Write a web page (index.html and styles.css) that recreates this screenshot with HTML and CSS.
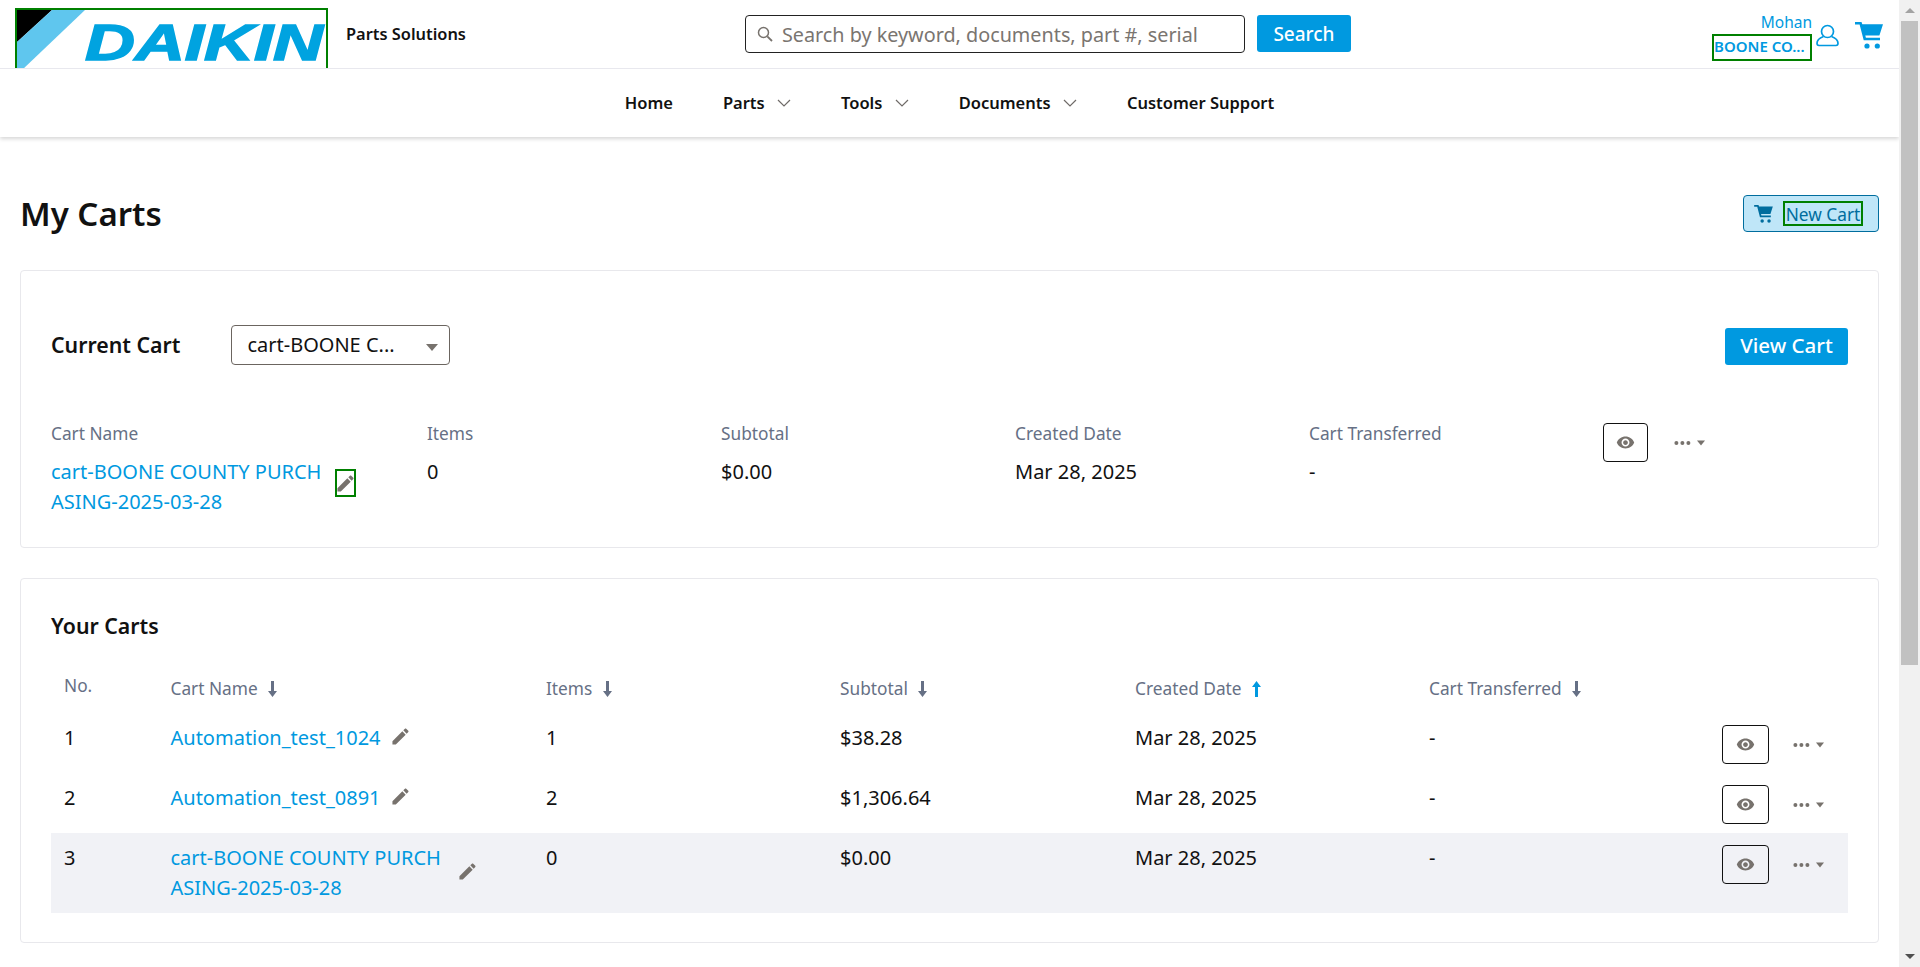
FILE: index.html
```html
<!DOCTYPE html>
<html lang="en">
<head>
    <meta charset="UTF-8">
    <title>My Carts</title>
    <link rel="stylesheet" href="styles.css">
</head>
<body>
    <svg class="icon-defs" width="0" height="0">
        <defs>
            <symbol id="pencil" viewBox="2.500 2.500 19 19"><path d="M3 17.250V21h3.750L17.810 9.940l-3.750-3.750L3 17.250zM20.710 7.040c.39-.39.39-1.020 0-1.410l-2.340-2.340c-.39-.39-1.020-.39-1.410 0l-1.830 1.830 3.750 3.750 1.830-1.830z"/></symbol>
            <symbol id="eye" viewBox="0 0 24 24"><path d="M12 4.500C7 4.500 2.730 7.610 1 12c1.730 4.390 6 7.500 11 7.500s9.270-3.110 11-7.500c-1.730-4.390-6-7.500-11-7.500zM12 17c-2.760 0-5-2.240-5-5s2.240-5 5-5 5 2.240 5 5-2.240 5-5 5zm0-8c-1.660 0-3 1.340-3 3s1.340 3 3 3 3-1.340 3-3-1.340-3-3-3z"/></symbol>
            <symbol id="cart" viewBox="0 0 28 27"><path d="M0 0h6.500l.8 2.300H28l-3.600 11.200H10.300l.6 2.200H25v2.500H8.700L4.600 2.500H0z"/><circle cx="12" cy="24" r="2.600"/><circle cx="22.300" cy="24" r="2.600"/></symbol>
            <symbol id="arrow-down" viewBox="0 0 9 16"><path d="M3 0h3v10h3l-4.500 6L0 10h3z"/></symbol>
            <symbol id="arrow-up" viewBox="0 0 9 16"><path d="M3 16h3V6h3L4.500 0 0 6h3z"/></symbol>
            <symbol id="more" viewBox="0 0 31 6"><circle cx="2.400" cy="3" r="2"/><circle cx="8.400" cy="3" r="2"/><circle cx="14.400" cy="3" r="2"/><path d="M23 .5h8l-4 5z"/></symbol>
            <symbol id="chevron" viewBox="0 0 14 8"><path d="M1 1l6 6 6-6" fill="none" stroke="currentColor" stroke-width="1.200"/></symbol>
        </defs>
    </svg>

    <div class="page">
        <header class="site-header">
            <div class="top-bar">
                <a class="logo">
                    <svg width="309" height="62" viewBox="0 0 309 62">
                        <polygon points="0,0 35,0 0,32" fill="#000"/>
                        <polygon points="35,0 68,0 5,60 0,60 0,32" fill="#5fc6ee"/>
                        <text class="logo-text" x="68" y="49.500" textLength="238" lengthAdjust="spacingAndGlyphs">DAIKIN</text>
                    </svg>
                </a>
                <span class="brand-sub">Parts Solutions</span>
                <form class="search">
                    <div class="search-box">
                        <svg class="search-icon" width="16" height="16" viewBox="0 0 16 16"><circle cx="6.500" cy="6.500" r="5" fill="none" stroke="#77726d" stroke-width="1.500"/><path d="M10.300 10.300L15 15" stroke="#77726d" stroke-width="1.800"/></svg>
                        <input class="search-input" type="text" placeholder="Search by keyword, documents, part #, serial number">
                    </div>
                    <button class="btn btn-primary search-btn" type="button">Search</button>
                </form>
                <div class="account">
                    <div class="account-names">
                        <span class="account-user">Mohan</span>
                        <span class="account-org">BOONE CO...</span>
                    </div>
                    <svg class="user-icon" width="23" height="23" viewBox="0 0 23 23"><circle cx="11.500" cy="7.500" r="6" fill="none" stroke="#0099e0" stroke-width="1.700"/><path d="M7.500 12.500C3.500 14 1 16.500 1 19.300 1 20.600 2 21.500 3 21.500h17c1 0 2-.9 2-2.200 0-2.800-2.500-5.300-6.500-6.800" fill="none" stroke="#0099e0" stroke-width="1.700"/></svg>
                    <svg class="top-cart"><use href="#cart"/></svg>
                </div>
            </div>
            <nav class="main-nav">
                <a class="nav-item">Home</a>
                <a class="nav-item">Parts <svg class="chevron"><use href="#chevron"/></svg></a>
                <a class="nav-item">Tools <svg class="chevron"><use href="#chevron"/></svg></a>
                <a class="nav-item">Documents <svg class="chevron"><use href="#chevron"/></svg></a>
                <a class="nav-item">Customer Support</a>
            </nav>
        </header>

        <main class="content">
            <div class="title-row">
                <h1 class="page-title">My Carts</h1>
                <button class="new-cart" type="button">
                    <svg class="new-cart-icon"><use href="#cart"/></svg>
                    <span class="new-cart-label">New Cart</span>
                </button>
            </div>

            <section class="card current-card">
                <div class="current-head">
                    <h2 class="card-title">Current Cart</h2>
                    <div class="cart-select">
                        <span class="select-value">cart-BOONE C...</span>
                        <i class="select-caret"></i>
                    </div>
                    <button class="btn btn-primary view-cart" type="button">View Cart</button>
                </div>
                <div class="current-grid">
                    <div class="cell">
                        <div class="cell-label">Cart Name</div>
                        <div class="name-wrap">
                            <a class="cart-link">cart-BOONE COUNTY PURCHASING-2025-03-28</a>
                            <span class="pencil-box"><svg class="pencil"><use href="#pencil"/></svg></span>
                        </div>
                    </div>
                    <div class="cell">
                        <div class="cell-label">Items</div>
                        <div class="cell-value">0</div>
                    </div>
                    <div class="cell">
                        <div class="cell-label">Subtotal</div>
                        <div class="cell-value">$0.00</div>
                    </div>
                    <div class="cell">
                        <div class="cell-label">Created Date</div>
                        <div class="cell-value">Mar 28, 2025</div>
                    </div>
                    <div class="cell">
                        <div class="cell-label">Cart Transferred</div>
                        <div class="cell-value">-</div>
                    </div>
                    <div class="actions current-actions">
                        <button class="eye-btn" type="button"><svg class="eye"><use href="#eye"/></svg></button>
                        <svg class="more"><use href="#more"/></svg>
                    </div>
                </div>
            </section>

            <section class="card carts-card">
                <h2 class="card-title">Your Carts</h2>
                <div class="carts-table">
                    <div class="table-head">
                        <div class="col-no">No.</div>
                        <div>Cart Name <svg class="sort"><use href="#arrow-down"/></svg></div>
                        <div>Items <svg class="sort"><use href="#arrow-down"/></svg></div>
                        <div>Subtotal <svg class="sort"><use href="#arrow-down"/></svg></div>
                        <div>Created Date <svg class="sort sort-active"><use href="#arrow-up"/></svg></div>
                        <div>Cart Transferred <svg class="sort"><use href="#arrow-down"/></svg></div>
                    </div>
                    <div class="table-row">
                        <div class="cell-value">1</div>
                        <div class="name-wrap">
                            <a class="cart-link">Automation_test_1024</a>
                            <svg class="pencil"><use href="#pencil"/></svg>
                        </div>
                        <div class="cell-value">1</div>
                        <div class="cell-value">$38.28</div>
                        <div class="cell-value">Mar 28, 2025</div>
                        <div class="cell-value">-</div>
                        <div class="actions">
                            <button class="eye-btn" type="button"><svg class="eye"><use href="#eye"/></svg></button>
                            <svg class="more"><use href="#more"/></svg>
                        </div>
                    </div>
                    <div class="table-row">
                        <div class="cell-value">2</div>
                        <div class="name-wrap">
                            <a class="cart-link">Automation_test_0891</a>
                            <svg class="pencil"><use href="#pencil"/></svg>
                        </div>
                        <div class="cell-value">2</div>
                        <div class="cell-value">$1,306.64</div>
                        <div class="cell-value">Mar 28, 2025</div>
                        <div class="cell-value">-</div>
                        <div class="actions">
                            <button class="eye-btn" type="button"><svg class="eye"><use href="#eye"/></svg></button>
                            <svg class="more"><use href="#more"/></svg>
                        </div>
                    </div>
                    <div class="table-row is-current">
                        <div class="cell-value">3</div>
                        <div class="name-wrap">
                            <a class="cart-link">cart-BOONE COUNTY PURCHASING-2025-03-28</a>
                            <svg class="pencil"><use href="#pencil"/></svg>
                        </div>
                        <div class="cell-value">0</div>
                        <div class="cell-value">$0.00</div>
                        <div class="cell-value">Mar 28, 2025</div>
                        <div class="cell-value">-</div>
                        <div class="actions">
                            <button class="eye-btn" type="button"><svg class="eye"><use href="#eye"/></svg></button>
                            <svg class="more"><use href="#more"/></svg>
                        </div>
                    </div>
                </div>
            </section>
        </main>
    </div>

    <div class="scrollbar">
        <i class="scroll-up"></i>
        <div class="scroll-track"><div class="scroll-thumb"></div></div>
        <i class="scroll-down"></i>
    </div>
</body>
</html>
```

FILE: styles.css
```css
* {
    box-sizing: border-box;
}
body {
    margin: 0;
    height: 100vh;
    overflow: hidden;
    display: flex;
    font-family: "Noto Sans", Arial, sans-serif;
    color: #111;
    background-color: #fff;
}
.icon-defs {
    position: absolute;
}
.page {
    flex: 1;
    min-width: 0;
}

/* header */
.site-header {
    box-shadow: 0 2px 4px rgba(0, 0, 0, 0.16);
}
.top-bar {
    height: 69px;
    display: flex;
    padding-left: 15px;
    overflow: hidden;
    border-bottom: 1px solid #e8e8ee;
}
.logo {
    display: block;
    flex: none;
    width: 313px;
    height: 70px;
    margin-top: 8px;
    border: 2px solid #008000;
}
.logo svg {
    display: block;
}
.logo-text {
    font-family: "Liberation Sans", Arial, sans-serif;
    font-size: 50px;
    font-weight: bold;
    font-style: italic;
    fill: #00a3e0;
    stroke: #00a3e0;
    stroke-width: 1.500px;
}
.brand-sub {
    flex: none;
    margin: 22px 0 0 18px;
    font-size: 16.400px;
    line-height: 24px;
    font-weight: 600;
}
.search {
    display: flex;
    flex: none;
    gap: 12px;
    margin: 15px 0 0 279px;
}
.search-box {
    display: flex;
    align-items: center;
    width: 500px;
    height: 38px;
    padding: 0 40px 0 11px;
    border: 1px solid #222;
    border-radius: 4px;
}
.search-icon {
    flex: none;
}
.search-input {
    flex: 1;
    min-width: 0;
    margin-left: 9px;
    padding: 0;
    border: 0;
    outline: 0;
    background: transparent;
    font-family: inherit;
    font-size: 19.800px;
}
.search-input::placeholder {
    color: #7a7570;
    opacity: 1;
}
.btn {
    border: 0;
    border-radius: 3px;
    font-family: inherit;
    color: #fff;
    cursor: pointer;
}
.btn-primary {
    background-color: #0099e0;
}
.search-btn {
    width: 94px;
    height: 37px;
    font-size: 19px;
    font-weight: 500;
}
.account {
    display: flex;
    margin-left: auto;
    padding-right: 16px;
}
.account-names {
    display: flex;
    flex-direction: column;
    align-items: flex-end;
    color: #0099e0;
}
.account-user {
    margin-top: 11px;
    font-size: 15.500px;
    line-height: 23px;
}
.account-org {
    width: 100px;
    height: 27px;
    border: 2px solid #008000;
    font-size: 15px;
    line-height: 20px;
    font-weight: 600;
    white-space: nowrap;
    overflow: hidden;
}
.user-icon {
    flex: none;
    margin: 24px 0 0 4px;
}
.top-cart {
    flex: none;
    width: 28px;
    height: 27px;
    margin: 22px 0 0 16px;
    fill: #0099e0;
}
.main-nav {
    height: 68px;
    display: flex;
    align-items: center;
    justify-content: center;
    gap: 50px;
    padding-bottom: 2px;
    font-size: 16.500px;
    font-weight: 600;
}
.chevron {
    width: 14px;
    height: 8px;
    margin-left: 8px;
    vertical-align: 2px;
    color: #6f6b68;
}

/* page title */
.content {
    padding: 0 20px;
}
.title-row {
    display: flex;
    align-items: center;
    justify-content: space-between;
    padding-top: 58px;
    margin-bottom: 38px;
}
.page-title {
    margin: 0;
    font-size: 33px;
    line-height: 37px;
    font-weight: 600;
}
.new-cart {
    display: flex;
    align-items: center;
    width: 136px;
    height: 37px;
    padding: 0 0 0 10px;
    border: 1px solid #006d9e;
    border-radius: 4px;
    background-color: #bfe6f8;
    color: #006d9e;
    font-family: inherit;
    cursor: pointer;
}
.new-cart-icon {
    flex: none;
    width: 19px;
    height: 18px;
    fill: #006d9e;
}
.new-cart-label {
    width: 80px;
    height: 25px;
    margin-left: 10px;
    border: 2px solid #008000;
    font-size: 17.300px;
    line-height: 23px;
    white-space: nowrap;
    text-align: center;
}

/* cards */
.card {
    border: 1px solid #e8e8ec;
    border-radius: 4px;
    padding: 0 30px;
}
.card-title {
    margin: 0;
    font-size: 21.300px;
    line-height: 28px;
    font-weight: 600;
}
.current-card {
    height: 278px;
    padding-top: 54px;
}
.current-head {
    display: flex;
    align-items: center;
    height: 40px;
}
.cart-select {
    display: flex;
    align-items: center;
    justify-content: space-between;
    width: 219px;
    height: 40px;
    margin-left: 51px;
    padding: 0 11px 0 15px;
    border: 1px solid #6b6560;
    border-radius: 4px;
    font-size: 20px;
}
.select-value {
    margin-top: -2px;
}
.select-caret {
    width: 0;
    height: 0;
    margin-top: 5px;
    border-style: solid;
    border-width: 7px 6.500px 0;
    border-color: #77726d transparent transparent;
}
.view-cart {
    align-self: flex-end;
    width: 123px;
    height: 37px;
    margin-left: auto;
    padding: 0 0 4px;
    font-size: 20.500px;
    font-weight: 500;
}
.current-grid {
    display: grid;
    grid-template-columns: 376px 294px 294px 294px 294px 1fr;
    margin-top: 57px;
}
.cell-label {
    font-size: 17.300px;
    line-height: 24px;
    color: #667085;
    margin-bottom: 11px;
}
.cell-value {
    font-size: 20px;
    line-height: 30px;
}
.name-wrap {
    display: flex;
    align-items: center;
}
.cart-link {
    max-width: 277px;
    font-size: 20px;
    line-height: 30px;
    color: #0099e0;
    word-break: break-all;
}
.pencil {
    flex: none;
    width: 17px;
    height: 17px;
    margin: -3px 0 0 11px;
    fill: #77726d;
}
.pencil-box {
    display: flex;
    align-items: center;
    justify-content: center;
    flex: none;
    width: 21px;
    height: 28px;
    margin: -8px 0 0 7px;
    border: 2px solid #008000;
}
.pencil-box .pencil {
    margin: 0;
}
.actions {
    display: flex;
    align-items: center;
    gap: 24px;
    height: 39px;
    margin-top: 2px;
    margin-bottom: -1px;
}
.current-actions {
    gap: 26px;
    margin-top: 1px;
}
.current-actions .eye-btn {
    width: 45px;
}
.eye-btn {
    display: flex;
    align-items: center;
    justify-content: center;
    width: 47px;
    height: 39px;
    padding: 0;
    border: 1px solid #111;
    border-radius: 4px;
    background: transparent;
    cursor: pointer;
}
.eye {
    width: 19px;
    height: 19px;
    fill: #77726d;
}
.more {
    width: 31px;
    height: 6px;
    fill: #77726d;
}

/* your carts table */
.carts-card {
    margin-top: 30px;
    padding-top: 33px;
    padding-bottom: 29px;
}
.table-head,
.table-row {
    display: grid;
    grid-template-columns: 106.500px 375.500px 294px 295px 294px 293px 1fr;
    align-items: start;
    padding-left: 13px;
}
.table-head {
    margin-top: 37px;
    height: 36px;
    font-size: 17.300px;
    line-height: 24px;
    color: #667085;
}
.col-no {
    margin-top: -3px;
}
.sort {
    width: 9px;
    height: 16px;
    margin-left: 6px;
    vertical-align: -2px;
    fill: #667085;
}
.sort-active {
    fill: #0099e0;
}
.table-row {
    min-height: 60px;
    padding-top: 10px;
    padding-bottom: 10px;
}
.is-current {
    background-color: #f1f2f6;
}

/* page scrollbar */
.scrollbar {
    flex: none;
    display: flex;
    flex-direction: column;
    align-items: center;
    width: 21px;
    background-color: #f1f1f1;
}
.scroll-track {
    flex: 1;
    width: 100%;
    padding: 0 2px;
}
.scroll-thumb {
    height: 644px;
    background-color: #c1c1c1;
}
.scroll-up,
.scroll-down {
    flex: none;
    width: 0;
    height: 0;
    border-style: solid;
    border-color: transparent;
}
.scroll-up {
    margin: 8px 0;
    border-width: 0 5px 5px;
    border-bottom-color: #a3a3a3;
}
.scroll-down {
    margin: 8px 0;
    border-width: 5px 5px 0;
    border-top-color: #505050;
}
```
